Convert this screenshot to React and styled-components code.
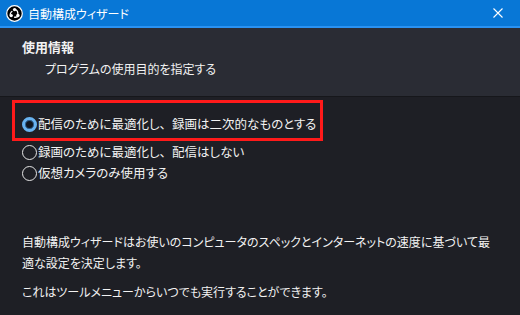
import React from 'react';
import styled, { createGlobalStyle } from 'styled-components';

const Global = createGlobalStyle`
  html, body {
    margin: 0;
    padding: 0;
    background: #1e1f25;
  }
  body {
    font-family: "Noto Sans CJK JP", "Noto Sans", sans-serif;
    font-feature-settings: "palt";
    color: #f2f2f2;
  }
`;

const Window = styled.div`
  width: 520px;
  height: 315px;
  display: flex;
  flex-direction: column;
  background: #1e1f25;
  overflow: hidden;
`;

const TitleBar = styled.div`
  height: 26px;
  flex: none;
  display: flex;
  align-items: center;
  padding: 0 0 0 6px;
  background: #0877d6;
  border-bottom: 2px solid #2a92f2;
  color: #fff;
  font-size: 12px;
`;

const TitleText = styled.span`
  margin-left: 5px;
  flex: 1;
`;

const CloseButton = styled.div`
  width: 44px;
  height: 26px;
  display: flex;
  align-items: center;
  justify-content: center;
`;

const Header = styled.div`
  height: 69px;
  flex: none;
  display: flex;
  flex-direction: column;
  padding: 9px 0 0 22px;
  box-sizing: border-box;
  background: #2a2c34;
  border-bottom: 1px solid #16171b;
`;

const HeaderTitle = styled.div`
  font-size: 13px;
  font-weight: 700;
  line-height: 20px;
`;

const HeaderSub = styled.div`
  font-size: 12px;
  line-height: 20px;
  margin: 2px 0 0 23px;
`;

const Body = styled.div`
  display: flex;
  flex-direction: column;
  padding-top: 3px;
`;

const Highlight = styled.div`
  margin-left: 12px;
  width: 311px;
  height: 41px;
  box-sizing: border-box;
  border: 3px solid #ff1a1a;
  padding: 12px 0 0 7px;
  margin-bottom: 2px;
`;

const Options = styled.div`
  display: flex;
  flex-direction: column;
  gap: 3px;
  padding-left: 22px;
`;

const Row = styled.label`
  display: flex;
  align-items: center;
  height: 18px;
  font-size: 12.5px;
  line-height: 18px;
  white-space: nowrap;
`;

const Comma = styled.span`
  font-feature-settings: normal;
`;

const Dot = styled.span`
  width: 15px;
  height: 15px;
  flex: none;
  box-sizing: border-box;
  border-radius: 50%;
  margin-right: 1px;
  border: ${p => (p.checked ? '3px solid #68b3f0' : '1.5px solid #e6e6e6')};
  background: ${p => (p.checked ? '#10161f' : 'transparent')};
  box-shadow: ${p => (p.checked ? 'inset 0 0 0 1px #2d5e8c' : 'none')};
`;

const Info = styled.div`
  padding: 49px 0 0 22px;
  font-size: 12px;
  line-height: 21px;
  display: flex;
  flex-direction: column;
  gap: 8px;
`;

const ObsLogo = () => (
  <svg width="17" height="17" viewBox="0 0 17 17">
    <circle cx="8.5" cy="8.5" r="7.8" fill="#000" stroke="#fff" strokeWidth="1.2" />
    <g fill="#fff">
      <circle cx="8.6" cy="4.6" r="1.7" />
      <circle cx="5.2" cy="10.6" r="1.7" />
      <circle cx="11.9" cy="10.4" r="1.7" />
      <path d="M10.2 4.2 C11.6 5 12.6 6.6 12.5 8.7 L11.2 8.9 C11.3 7.4 10.7 6.2 9.8 5.6 Z" />
      <path d="M3.6 10 C3.5 8.4 4.4 6.6 6 5.7 L6.7 6.8 C5.5 7.5 4.9 8.6 4.9 9.7 Z" />
      <path d="M12.9 11.7 C11.7 12.7 9.8 13.2 8 12.7 L8.2 11.4 C9.6 11.8 10.9 11.5 11.8 10.8 Z" />
    </g>
  </svg>
);

const CloseIcon = () => (
  <svg width="10" height="10" viewBox="0 0 10 10">
    <path d="M0.5 0.5 L9.5 9.5 M9.5 0.5 L0.5 9.5" stroke="#fff" strokeWidth="1.1" />
  </svg>
);

export default function App() {
  return (
    <Window>
      <Global />
      <TitleBar>
        <ObsLogo />
        <TitleText>自動構成ウィザード</TitleText>
        <CloseButton>
          <CloseIcon />
        </CloseButton>
      </TitleBar>
      <Header>
        <HeaderTitle>使用情報</HeaderTitle>
        <HeaderSub>プログラムの使用目的を指定する</HeaderSub>
      </Header>
      <Body>
        <Highlight>
          <Row>
            <Dot checked />
            配信のために最適化し<Comma>、</Comma>録画は二次的なものとする
          </Row>
        </Highlight>
        <Options>
          <Row>
            <Dot />
            録画のために最適化し<Comma>、</Comma>配信はしない
          </Row>
          <Row>
            <Dot />
            仮想カメラのみ使用する
          </Row>
        </Options>
        <Info>
          <div>
            自動構成ウィザードはお使いのコンピュータのスペックとインターネットの速度に基づいて最
            <br />
            適な設定を決定します。
          </div>
          <div>これはツールメニューからいつでも実行することができます。</div>
        </Info>
      </Body>
    </Window>
  );
}
